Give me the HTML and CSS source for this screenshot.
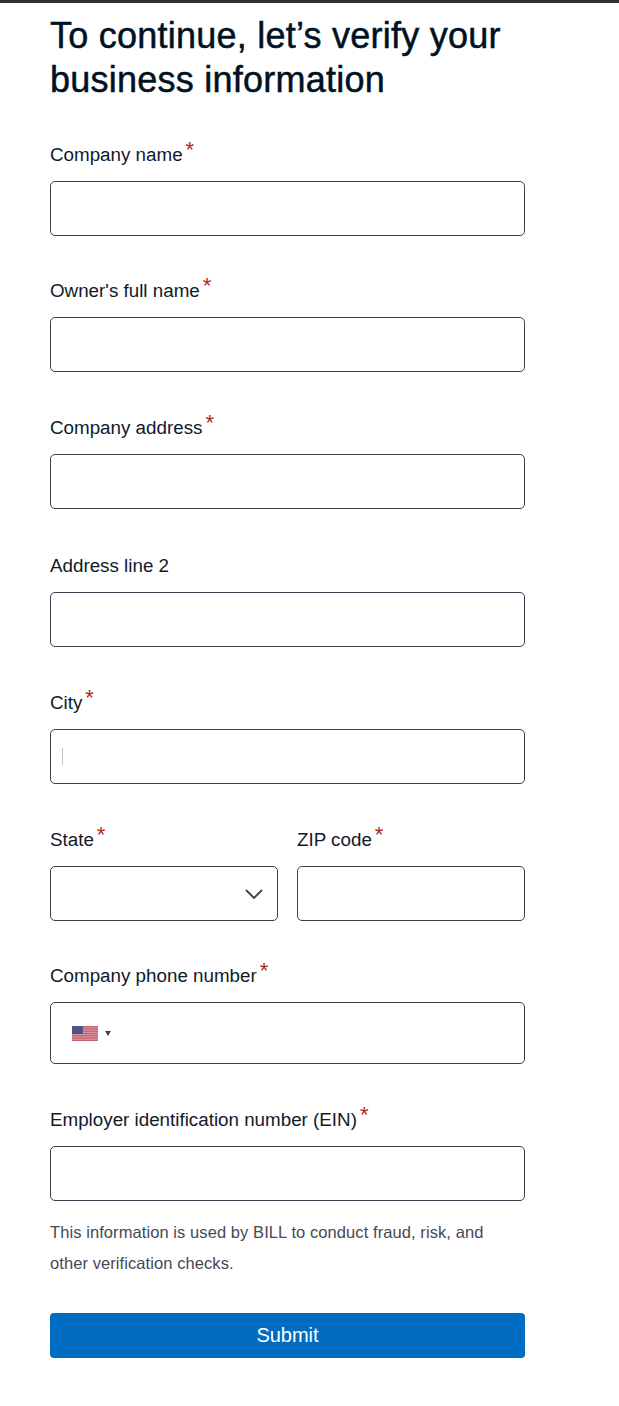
FILE: index.html
```html
<!DOCTYPE html>
<html lang="en">
<head>
<meta charset="utf-8">
<title>Verify your business information</title>
<link rel="stylesheet" href="styles.css">
</head>
<body>
<div class="topbar"></div>
<main class="page">
  <h1 class="title">To continue, let’s verify your business information</h1>
  <form class="form">
    <div class="field tight"><label class="label">Company name<span class="req">*</span></label><input class="input" type="text"></div>
    <div class="field"><label class="label">Owner's full name<span class="req">*</span></label><input class="input" type="text"></div>
    <div class="field loose"><label class="label">Company address<span class="req">*</span></label><input class="input" type="text"></div>
    <div class="field"><label class="label">Address line 2</label><input class="input" type="text"></div>
    <div class="field"><label class="label">City<span class="req">*</span></label><div class="input caret-box"><span class="caret"></span></div></div>
    <div class="row">
      <div class="field tight"><label class="label">State<span class="req">*</span></label>
        <div class="input select">
          <svg class="chevron" width="20" height="12" viewBox="0 0 20 12"><path d="M2 2l8 8 8-8" fill="none" stroke="#3c3f47" stroke-width="1.8"/></svg>
        </div>
      </div>
      <div class="field tight"><label class="label">ZIP code<span class="req">*</span></label><input class="input" type="text"></div>
    </div>
    <div class="field"><label class="label">Company phone number<span class="req">*</span></label>
      <div class="input phone">
        <svg class="flag" width="26" height="15" viewBox="0 0 26 15">
          <rect width="26" height="15" fill="#dc98a0"/>
          <g fill="#c4606e">
            <rect y="0" width="26" height="1.2"/><rect y="2.3" width="26" height="1.2"/><rect y="4.6" width="26" height="1.2"/><rect y="6.9" width="26" height="1.2"/><rect y="9.2" width="26" height="1.2"/><rect y="11.5" width="26" height="1.2"/><rect y="13.8" width="26" height="1.2"/>
          </g>
          <rect width="11" height="8" fill="#50528a"/>
        </svg>
        <svg class="tri" width="6" height="5" viewBox="0 0 6 5"><path d="M0 0h6L3 5z" fill="#444"/></svg>
      </div>
    </div>
    <div class="field ein-field"><label class="label">Employer identification number (EIN)<span class="req">*</span></label><input class="input" type="text"></div>
    <p class="note">This information is used by BILL to conduct fraud, risk, and other verification checks.</p>
    <button class="submit" type="button">Submit</button>
  </form>
</main>
</body>
</html>
```
FILE: styles.css
```css
* { box-sizing: border-box; }
html, body { margin: 0; padding: 0; background: #fff; }
body { font-family: "Liberation Sans", Arial, sans-serif; color: #0b1526; }
.topbar { height: 3px; background: #333; }
.page { width: 475px; margin-left: 50px; }
.title { margin: 11px 0 0; font-size: 36px; line-height: 43.5px; letter-spacing: 0.24px; font-weight: 400; color: #001122; -webkit-text-stroke: 0.5px #001122; height: 87px; }
.form { display: block; padding-top: 42px; }
.field { margin-bottom: 44px; }
.field.tight { margin-bottom: 43px; }
.field.loose { margin-bottom: 45px; }
.label { display: block; font-size: 18.8px; line-height: 24px; height: 24px; margin-bottom: 14px; color: #0f1a2b; white-space: nowrap; }
.req { color: #b3261e; font-size: 22px; line-height: 20px; margin-left: 3px; position: relative; top: -4.5px; }
.input { display: block; width: 100%; height: 55px; border: 1px solid #3c3f4d; border-radius: 5px; background: #fff; padding: 0; margin: 0; outline: none; }
.caret-box { display: flex; align-items: center; padding-left: 11px; }
.caret { width: 1px; height: 17px; background: #c4c4c8; }
.row { display: grid; grid-template-columns: 228px 228px; column-gap: 19px; }
.select { display: flex; align-items: center; justify-content: flex-end; padding-right: 13px; }
.phone { height: 62px; display: flex; align-items: center; padding-left: 21px; gap: 7px; }
.flag { display: block; }
.tri { display: block; }
.ein-field { margin-bottom: 16px; }
.note { margin: 0; padding-right: 30px; font-size: 16.5px; letter-spacing: 0.08px; line-height: 31px; color: #454956; }
.submit { display: block; width: 100%; height: 45px; margin-top: 34px; border: 0; border-radius: 4px; background: #006dc3; color: #fff; font-family: inherit; font-size: 20px; }
```
